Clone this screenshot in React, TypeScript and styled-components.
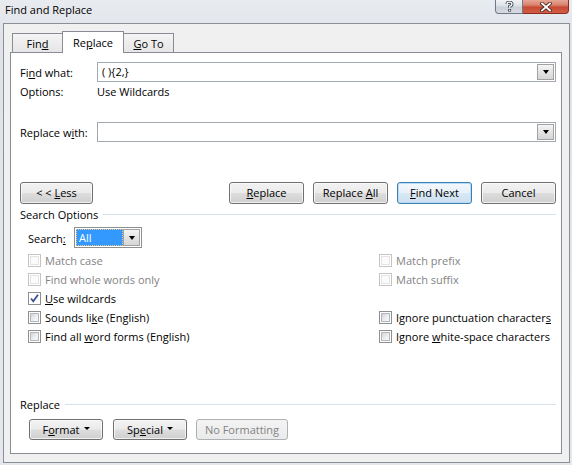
import React from "react";
import styled, { createGlobalStyle, css } from "styled-components";

const Global = createGlobalStyle`
  html, body { margin: 0; padding: 0; }
  body {
    width: 572px;
    height: 465px;
    overflow: hidden;
    background: #dfe3e8;
    font-family: "Open Sans", "Noto Sans", sans-serif;
    font-size: 11px;
    color: #000;
  }
`;

const Window = styled.div`
  width: 572px;
  height: 465px;
  box-sizing: border-box;
  display: flex;
  flex-direction: column;
  background: linear-gradient(#e8ebef, #dfe3e8 40px, #e4e7eb);
`;

const TitleBar = styled.div`
  height: 23px;
  flex: none;
  display: flex;
  align-items: flex-start;
  padding: 0 3px 0 5px;
`;

const Title = styled.div`
  flex: 1;
  font-size: 11px;
  line-height: 19px;
  color: #000;
`;

const CaptionGroup = styled.div`
  display: flex;
  height: 14px;
`;

const CaptionButton = styled.div<{ $close?: boolean }>`
  box-sizing: border-box;
  height: 14px;
  display: flex;
  align-items: center;
  justify-content: center;
  border: 1px solid #6e7886;
  border-top: none;
  ${(p) =>
    p.$close
      ? css`
          width: 46px;
          border-color: #8a2d20;
          border-left: none;
          border-radius: 0 0 4px 0;
          background: linear-gradient(#e8a796 0%, #d9806b 40%, #c64a33 55%, #d25e44 100%);
        `
      : css`
          width: 28px;
          border-radius: 0 0 0 4px;
          background: linear-gradient(#f1f3f6 0%, #dde1e7 45%, #cbd1d9 55%, #d6dbe2 100%);
        `}
`;

const Client = styled.div`
  flex: 1;
  margin: 0 2px 2px 3px;
  border: 1px solid #8b9097;
  background: #f0f0f0;
  padding: 7px 7px 8px 6px;
  display: flex;
  flex-direction: column;
  min-height: 0;
`;

const TabStrip = styled.div`
  display: flex;
  align-items: flex-end;
  height: 22px;
  padding-left: 2px;
  margin-bottom: -1px;
  position: relative;
  z-index: 1;
`;

const Tab = styled.div<{ $active?: boolean; $side?: "left" | "right" }>`
  box-sizing: border-box;
  display: flex;
  align-items: center;
  justify-content: center;
  border: 1px solid #898c95;
  border-bottom: none;
  ${(p) =>
    p.$active
      ? css`
          width: 62px;
          height: 22px;
          background: #fff;
          padding-bottom: 1px;
        `
      : css`
          width: 50px;
          height: 19px;
          margin-bottom: 1px;
          background: linear-gradient(#f4f4f4, #e6e6e6);
        `}
  ${(p) => p.$side === "left" && css`border-right: none;`}
  ${(p) => p.$side === "right" && css`border-left: none;`}
`;

const Panel = styled.div`
  flex: 1;
  background: #fff;
  border: 1px solid #898c95;
  padding: 9px 5px 0 9px;
  display: flex;
  flex-direction: column;
`;

const Key = styled.span`
  text-decoration: underline;
  text-underline-offset: 1px;
`;

const FieldRow = styled.div<{ $gap?: number }>`
  display: grid;
  grid-template-columns: 77px 1fr;
  align-items: center;
  height: 20px;
  margin-top: ${(p) => p.$gap ?? 0}px;
`;

const InfoRow = styled.div`
  display: grid;
  grid-template-columns: 77px 1fr;
  height: 14px;
  line-height: 14px;
  margin-top: 3px;
`;

const ComboInput = styled.div`
  box-sizing: border-box;
  height: 20px;
  border: 1px solid #a3a9b1;
  display: flex;
  align-items: stretch;
  padding: 1px;
  background: #fff;
`;

const ComboText = styled.div`
  flex: 1;
  padding-left: 3px;
  line-height: 16px;
`;

const ArrowButton = styled.div`
  box-sizing: border-box;
  width: 17px;
  border: 1px solid #a2a2a2;
  background: linear-gradient(#f5f5f5, #e4e4e4 50%, #d6d6d6);
  display: flex;
  align-items: center;
  justify-content: center;
`;

const Arrow = styled.span`
  width: 0;
  height: 0;
  border-left: 3.5px solid transparent;
  border-right: 3.5px solid transparent;
  border-top: 4px solid #000;
`;

const ButtonRow = styled.div<{ $gap: number; $indent?: number }>`
  display: flex;
  align-items: center;
  gap: 9px;
  margin-top: ${(p) => p.$gap}px;
  padding-left: ${(p) => p.$indent ?? 0}px;
`;

const Spacer = styled.div`
  flex: 1;
`;

const Button = styled.div<{ $w: number; $h?: number; $primary?: boolean; $disabled?: boolean; $gapAfter?: number }>`
  box-sizing: border-box;
  width: ${(p) => p.$w}px;
  height: ${(p) => p.$h ?? 22}px;
  margin-right: ${(p) => p.$gapAfter ?? 0}px;
  display: flex;
  align-items: center;
  justify-content: center;
  gap: 4px;
  border: 1px solid #707070;
  border-radius: 3px;
  background: linear-gradient(#f2f2f2 0%, #ebebeb 48%, #dddddd 52%, #cfcfcf 100%);
  box-shadow: inset 0 0 0 1px rgba(255, 255, 255, 0.7);
  color: #000;
  padding-bottom: 1px;
  ${(p) =>
    p.$primary &&
    css`
      border-color: #3c7fb1;
      background: linear-gradient(#f3f8fc 0%, #e8f1f9 48%, #d9e8f4 52%, #cde0ef 100%);
      box-shadow: inset 0 0 0 1px #b8dcf5;
    `}
  ${(p) =>
    p.$disabled &&
    css`
      border-color: #adb2b5;
      background: linear-gradient(#f4f4f4, #eaeaea);
      box-shadow: none;
      color: #838383;
    `}
`;

const MenuCaret = styled.span`
  width: 0;
  height: 0;
  border-left: 3px solid transparent;
  border-right: 3px solid transparent;
  border-top: 3px solid #000;
  margin-bottom: 1px;
`;

const SectionHeader = styled.div<{ $gap: number }>`
  display: flex;
  align-items: center;
  gap: 5px;
  height: 14px;
  line-height: 14px;
  margin-top: ${(p) => p.$gap}px;
`;

const Rule = styled.div`
  flex: 1;
  height: 1px;
  background: #d8e1e8;
  margin-top: -1px;
`;

const SearchRow = styled.div`
  display: flex;
  align-items: center;
  height: 21px;
  margin-top: 5px;
  padding-left: 8px;
`;

const SearchLabel = styled.div`
  width: 46px;
  padding-top: 1px;
`;

const SelectBox = styled.div`
  box-sizing: border-box;
  width: 68px;
  height: 21px;
  border: 1px solid #8e8f8f;
  background: #fff;
  display: flex;
  padding: 1px;
`;

const SelectValue = styled.div`
  box-sizing: border-box;
  flex: 1;
  background: #3399ff;
  color: #fff;
  padding-left: 2px;
  line-height: 15px;
  border: 1px dotted #f3c37a;
`;

const OptionGrid = styled.div`
  display: grid;
  grid-template-columns: 351px 1fr;
  grid-auto-rows: 19px;
  margin-top: 3px;
  padding-left: 8px;
`;

const Option = styled.div<{ $disabled?: boolean }>`
  display: flex;
  align-items: center;
  gap: 4px;
  color: ${(p) => (p.$disabled ? "#838383" : "#000")};
`;

const Box = styled.span<{ $disabled?: boolean }>`
  box-sizing: border-box;
  width: 13px;
  height: 13px;
  flex: none;
  border: 1px solid ${(p) => (p.$disabled ? "#c4c4c4" : "#8e8f8f")};
  background: #fff;
  display: flex;
  align-items: center;
  justify-content: center;
`;

const BoxFill = styled.span<{ $disabled?: boolean }>`
  box-sizing: border-box;
  width: 9px;
  height: 9px;
  border: 1px solid ${(p) => (p.$disabled ? "#e4e4e4" : "#b3b7bd")};
  background: ${(p) =>
    p.$disabled ? "#fbfbfb" : "linear-gradient(135deg, #d3d6da, #eef0f1 60%, #f8f8f8)"};
`;

const Cell = styled.div``;

function CloseGlyph() {
  return (
    <svg width="12" height="10" viewBox="0 0 12 10">
      <path d="M2 1.5 L10 8.5 M10 1.5 L2 8.5" stroke="#4a2a26" strokeWidth="3.6" strokeLinecap="square" />
      <path d="M2 1.5 L10 8.5 M10 1.5 L2 8.5" stroke="#fff" strokeWidth="1.8" strokeLinecap="square" />
    </svg>
  );
}

function HelpGlyph() {
  return (
    <svg width="9" height="11" viewBox="0 0 9 11">
      <path d="M2 3 Q2 1.2 4.5 1.2 Q7 1.2 7 3.2 Q7 4.6 4.6 5.4 L4.6 6.8" fill="none" stroke="#3e4650" strokeWidth="3" />
      <rect x="3.1" y="8" width="3" height="2.6" fill="#3e4650" />
      <path d="M2 3 Q2 1.2 4.5 1.2 Q7 1.2 7 3.2 Q7 4.6 4.6 5.4 L4.6 6.8" fill="none" stroke="#fff" strokeWidth="1.3" />
      <rect x="4" y="8.7" width="1.3" height="1.3" fill="#fff" />
    </svg>
  );
}

function Check() {
  return (
    <svg width="11" height="11" viewBox="0 0 11 11">
      <path d="M2 5.5 L4.3 8.3 L9 1.8" fill="none" stroke="#3b4f8c" strokeWidth="1.8" />
    </svg>
  );
}

type Opt = { label: React.ReactNode; disabled?: boolean; checked?: boolean };

function CheckOption({ label, disabled, checked }: Opt) {
  return (
    <Option $disabled={disabled}>
      <Box $disabled={disabled}>{checked ? <Check /> : <BoxFill $disabled={disabled} />}</Box>
      <span>{label}</span>
    </Option>
  );
}

const options: (Opt | null)[] = [
  { label: "Match case", disabled: true },
  { label: "Match prefix", disabled: true },
  { label: "Find whole words only", disabled: true },
  { label: "Match suffix", disabled: true },
  { label: <><Key>U</Key>se wildcards</>, checked: true },
  null,
  { label: <>Sounds li<Key>k</Key>e (English)</> },
  { label: <>Ignore punctuation character<Key>s</Key></> },
  { label: <>Find all <Key>w</Key>ord forms (English)</> },
  { label: <>Ignore <Key>w</Key>hite-space characters</> },
];

export default function App() {
  return (
    <>
      <Global />
      <Window>
        <TitleBar>
          <Title>Find and Replace</Title>
          <CaptionGroup>
            <CaptionButton>
              <HelpGlyph />
            </CaptionButton>
            <CaptionButton $close>
              <CloseGlyph />
            </CaptionButton>
          </CaptionGroup>
        </TitleBar>
        <Client>
          <TabStrip>
            <Tab $side="left">
              <span>
                Fin<Key>d</Key>
              </span>
            </Tab>
            <Tab $active>
              <span>
                Re<Key>p</Key>lace
              </span>
            </Tab>
            <Tab $side="right">
              <span>
                <Key>G</Key>o To
              </span>
            </Tab>
          </TabStrip>
          <Panel>
            <FieldRow>
              <span>
                Fi<Key>n</Key>d what:
              </span>
              <ComboInput>
                <ComboText>( ){"{2,}"}</ComboText>
                <ArrowButton>
                  <Arrow />
                </ArrowButton>
              </ComboInput>
            </FieldRow>
            <InfoRow>
              <span>Options:</span>
              <span>Use Wildcards</span>
            </InfoRow>
            <FieldRow $gap={23}>
              <span>
                Replace w<Key>i</Key>th:
              </span>
              <ComboInput>
                <ComboText />
                <ArrowButton>
                  <Arrow />
                </ArrowButton>
              </ComboInput>
            </FieldRow>

            <ButtonRow $gap={40}>
              <Button $w={73}>
                <span>
                  &lt; &lt; <Key>L</Key>ess
                </span>
              </Button>
              <Spacer />
              <Button $w={75}>
                <span>
                  <Key>R</Key>eplace
                </span>
              </Button>
              <Button $w={75}>
                <span>
                  Replace <Key>A</Key>ll
                </span>
              </Button>
              <Button $w={75} $primary>
                <span>
                  <Key>F</Key>ind Next
                </span>
              </Button>
              <Button $w={75}>Cancel</Button>
            </ButtonRow>

            <SectionHeader $gap={4}>
              <span>Search Options</span>
              <Rule />
            </SectionHeader>

            <SearchRow>
              <SearchLabel>
                Search<Key>:</Key>
              </SearchLabel>
              <SelectBox>
                <SelectValue>All</SelectValue>
                <ArrowButton>
                  <Arrow />
                </ArrowButton>
              </SelectBox>
            </SearchRow>

            <OptionGrid>
              {options.map((o, i) => (o ? <CheckOption key={i} {...o} /> : <Cell key={i} />))}
            </OptionGrid>

            <SectionHeader $gap={52}>
              <span>Replace</span>
              <Rule />
            </SectionHeader>

            <ButtonRow $gap={7} $indent={9}>
              <Button $w={74} $h={21} $gapAfter={1}>
                <span>
                  F<Key>o</Key>rmat
                </span>
                <MenuCaret />
              </Button>
              <Button $w={74} $h={21}>
                <span>
                  Sp<Key>e</Key>cial
                </span>
                <MenuCaret />
              </Button>
              <Button $w={92} $h={21} $disabled>
                No Formatting
              </Button>
            </ButtonRow>
          </Panel>
        </Client>
      </Window>
    </>
  );
}
